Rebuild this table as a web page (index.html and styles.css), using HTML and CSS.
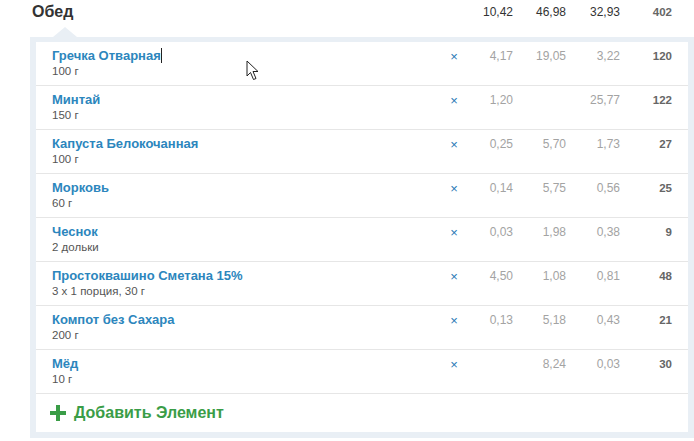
FILE: index.html
```html
<!DOCTYPE html>
<html>
    <head>
        <meta charset="UTF-8" />
        <link rel="stylesheet" href="styles.css">
    </head>
    <body>
        <div class="meal-head">
            <div class="meal-title">Обед</div>
            <div></div>
            <div class="num">10,42</div>
            <div class="num">46,98</div>
            <div class="num">32,93</div>
            <div class="num kcal">402</div>
        </div>

        <div class="panel">
            <div class="row">
                <div class="food">
                    <a class="name">Гречка Отварная<span class="caret"></span></a>
                    <div class="amount">100 г</div>
                </div>
                <div class="del">×</div>
                <div class="num">4,17</div>
                <div class="num">19,05</div>
                <div class="num">3,22</div>
                <div class="num kcal">120</div>
            </div>
            <div class="row">
                <div class="food">
                    <a class="name">Минтай</a>
                    <div class="amount">150 г</div>
                </div>
                <div class="del">×</div>
                <div class="num">1,20</div>
                <div class="num"></div>
                <div class="num">25,77</div>
                <div class="num kcal">122</div>
            </div>
            <div class="row">
                <div class="food">
                    <a class="name">Капуста Белокочанная</a>
                    <div class="amount">100 г</div>
                </div>
                <div class="del">×</div>
                <div class="num">0,25</div>
                <div class="num">5,70</div>
                <div class="num">1,73</div>
                <div class="num kcal">27</div>
            </div>
            <div class="row">
                <div class="food">
                    <a class="name">Морковь</a>
                    <div class="amount">60 г</div>
                </div>
                <div class="del">×</div>
                <div class="num">0,14</div>
                <div class="num">5,75</div>
                <div class="num">0,56</div>
                <div class="num kcal">25</div>
            </div>
            <div class="row">
                <div class="food">
                    <a class="name">Чеснок</a>
                    <div class="amount">2 дольки</div>
                </div>
                <div class="del">×</div>
                <div class="num">0,03</div>
                <div class="num">1,98</div>
                <div class="num">0,38</div>
                <div class="num kcal">9</div>
            </div>
            <div class="row">
                <div class="food">
                    <a class="name">Простоквашино Сметана 15%</a>
                    <div class="amount">3 x 1 порция, 30 г</div>
                </div>
                <div class="del">×</div>
                <div class="num">4,50</div>
                <div class="num">1,08</div>
                <div class="num">0,81</div>
                <div class="num kcal">48</div>
            </div>
            <div class="row">
                <div class="food">
                    <a class="name">Компот без Сахара</a>
                    <div class="amount">200 г</div>
                </div>
                <div class="del">×</div>
                <div class="num">0,13</div>
                <div class="num">5,18</div>
                <div class="num">0,43</div>
                <div class="num kcal">21</div>
            </div>
            <div class="row">
                <div class="food">
                    <a class="name">Мёд</a>
                    <div class="amount">10 г</div>
                </div>
                <div class="del">×</div>
                <div class="num"></div>
                <div class="num">8,24</div>
                <div class="num">0,03</div>
                <div class="num kcal">30</div>
            </div>
            <div class="add">
                <svg class="plus" width="16" height="16" viewBox="0 0 16 16">
                    <rect x="6" y="0" width="4" height="16" fill="#3a9d47"/>
                    <rect x="0" y="6" width="16" height="4" fill="#3a9d47"/>
                </svg>
                <span>Добавить Элемент</span>
            </div>
        </div>

        <svg class="pointer" width="14" height="21" viewBox="0 0 14 21">
            <path d="M1 1 L1 16 L4.5 12.5 L7.5 19.5 L10 18.5 L7 11.5 L12 11.5 Z" fill="#fff" stroke="#222" stroke-width="1"/>
        </svg>
    </body>
</html>
```

FILE: styles.css
```css
body {
    margin: 0;
    background-color: white;
    font-family: "Liberation Sans", Arial, sans-serif;
    position: relative;
}

.meal-head {
    display: grid;
    grid-template-columns: 1fr 28px 45px 53px 54px 52px;
    align-items: center;
    height: 26px;
    padding-left: 32px;
    padding-right: 22px;
    margin-top: -1px;
}

.meal-title {
    font-size: 16px;
    font-weight: bold;
    color: #333;
}

.meal-head .num {
    color: #333;
}

.meal-head .kcal {
    color: #222;
}

.panel {
    position: relative;
    margin-top: 12px;
    margin-left: 30px;
    margin-right: 0;
    border: 6px solid #e9eff5;
    border-top-width: 5px;
    background-color: white;
}

.panel:before {
    content: "";
    position: absolute;
    left: 17px;
    top: -15px;
    border-left: 12px solid transparent;
    border-right: 12px solid transparent;
    border-bottom: 10px solid #e9eff5;
}

.row {
    display: grid;
    grid-template-columns: 1fr 28px 45px 53px 54px 52px;
    align-items: start;
    padding: 5px 16px 6px 16px;
    border-bottom: 1px solid #e6e6e6;
}

.name {
    display: block;
    font-size: 13px;
    font-weight: bold;
    line-height: 17px;
    color: #2c86bd;
}

.caret {
    display: inline-block;
    width: 1px;
    height: 15px;
    background-color: #222;
    vertical-align: -3px;
}

.amount {
    font-size: 11.5px;
    line-height: 15px;
    color: #555;
}

.del {
    text-align: center;
    font-size: 13px;
    line-height: 19px;
    color: #2a7ab5;
}

.num {
    text-align: right;
    font-size: 12px;
    line-height: 19px;
    color: #a3a3a3;
}

.num.kcal {
    font-weight: bold;
    font-size: 11.5px;
    color: #666;
}

.add {
    display: flex;
    align-items: center;
    gap: 8px;
    height: 38px;
    padding-left: 14px;
    font-size: 16px;
    font-weight: bold;
    color: #3a9d47;
}

.pointer {
    position: absolute;
    left: 246px;
    top: 60px;
}
```
